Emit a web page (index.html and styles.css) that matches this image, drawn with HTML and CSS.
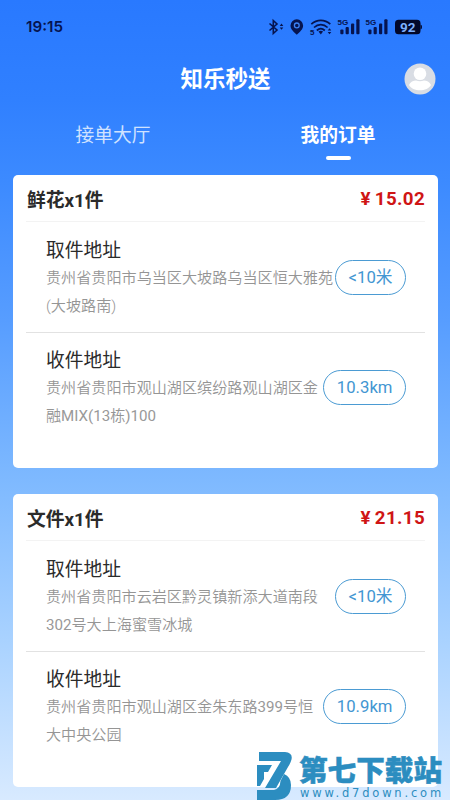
FILE: index.html
```html
<!DOCTYPE html>
<html lang="zh-CN">
<head>
<meta charset="utf-8">
<meta name="viewport" content="width=device-width, initial-scale=1">
<title>知乐秒送</title>
<link rel="stylesheet" href="styles.css">
</head>
<body>
<div class="app">
  <div class="status">
    <span class="time">19:15</span>
    <svg class="status-icons" width="154" height="20" viewBox="268 17 154 20" fill="none" stroke="#06144f">
      <path d="M269.500 23.500l7.500 6.500-3.700 3.500V20.500l3.700 3.500-7.500 6.500" stroke-width="1.600"/>
      <path d="M281.500 23.600l1.800 2.400h-3.600zM281.500 29.800l1.800-2.400h-3.600z" fill="#06144f" stroke="none"/>
      <path d="M296.800 19.300a6.300 6.300 0 0 1 6.300 6.300c0 3.800-3.500 6.700-6.300 9.200-2.800-2.500-6.300-5.400-6.300-9.200a6.300 6.300 0 0 1 6.300-6.300z" fill="#06144f" stroke="none"/>
      <circle cx="296.800" cy="25.400" r="2.400" stroke="#3b82f5" stroke-width="1.300"/>
      <path d="M311.300 24.200c5.500-5.200 13.500-5.200 19 0M314 27.500c4-3.700 9.600-3.700 13.600 0M316.800 30.500c2.400-2.200 5.600-2.200 8 0" stroke-width="1.700"/>
      <path d="M318.500 31.600q2.300-1.600 4.600 0l-2.300 3z" fill="#06144f" stroke="none"/>
      <path d="M329.500 28.300l1.800 2.300h-3.600zM329.500 34.300l1.800-2.300h-3.600z" fill="#06144f" stroke="none"/>
      <g fill="#06144f" stroke="none" class="tiny">
        <text x="310" y="34.500">5</text>
        <text x="337.500" y="25">5G</text>
        <text x="365.500" y="25">5G</text>
        <rect x="340.300" y="29.500" width="3.200" height="4.800" rx="1"/>
        <rect x="345.600" y="27" width="3.200" height="7.300" rx="1"/>
        <rect x="351" y="23.500" width="3.200" height="10.800" rx="1"/>
        <rect x="356.300" y="19.200" width="3.200" height="15.100" rx="1"/>
        <rect x="368.300" y="29.500" width="3.200" height="4.800" rx="1"/>
        <rect x="373.600" y="27" width="3.200" height="7.300" rx="1"/>
        <rect x="379" y="23.500" width="3.200" height="10.800" rx="1"/>
        <rect x="384.300" y="19.200" width="3.200" height="15.100" rx="1"/>
        <rect x="395" y="19.800" width="25.500" height="14.500" rx="3.500" fill="#02082a"/>
        <path d="M420.500 24.500q1.500.3 1.500 2.500t-1.500 2.500z" fill="#02082a"/>
      </g>
      <text class="battery" x="407.800" y="31.600" text-anchor="middle" fill="#7db0ff" stroke="none">92</text>
    </svg>
  </div>

  <header class="titlebar">
    <h1>知乐秒送</h1>
    <svg class="avatar" width="32" height="32" viewBox="0 0 32 32">
      <circle cx="16" cy="16" r="15.500" fill="#d9dde4"/>
      <circle cx="16" cy="10.800" r="6.300" fill="#fff"/>
      <path d="M5 22c1.200-3.200 4.500-4.500 7-4.500q4 1.600 8 0c2.500 0 5.800 1.300 7 4.500-2 3.500-6.200 5.300-11 5.300S7 25.500 5 22z" fill="#fff"/>
    </svg>
  </header>

  <nav class="tabs">
    <div class="tab">接单大厅</div>
    <div class="tab active">我的订单</div>
  </nav>

  <main class="orders">
    <section class="card">
      <div class="card-head"><span>鲜花x1件</span><span class="price"><span class="yen">¥</span>15.02</span></div>
      <div class="stop">
        <div class="place"><h2>取件地址</h2><p>贵州省贵阳市乌当区大坡路乌当区恒大雅苑<br>(大坡路南)</p></div>
        <span class="distance">&lt;10米</span>
      </div>
      <div class="stop">
        <div class="place"><h2>收件地址</h2><p>贵州省贵阳市观山湖区缤纷路观山湖区金<br>融<span class="latin">MIX(13</span>栋<span class="latin">)100</span></p></div>
        <span class="distance">10.3km</span>
      </div>
    </section>
    <section class="card">
      <div class="card-head"><span>文件x1件</span><span class="price"><span class="yen">¥</span>21.15</span></div>
      <div class="stop">
        <div class="place"><h2>取件地址</h2><p>贵州省贵阳市云岩区黔灵镇新添大道南段<br><span class="latin">302</span>号大上海蜜雪冰城</p></div>
        <span class="distance">&lt;10米</span>
      </div>
      <div class="stop">
        <div class="place"><h2>收件地址</h2><p>贵州省贵阳市观山湖区金朱东路<span class="latin">399</span>号恒<br>大中央公园</p></div>
        <span class="distance">10.9km</span>
      </div>
    </section>
  </main>

  <div class="watermark">
    <svg width="36" height="48" viewBox="0 0 36 48" fill="#2c8dc0">
      <path d="M0 13H15L11 20H7V27L3 34H0z"/>
      <path d="M27 22Q34 25 34 33Q34 48 18 48H0V38H17Q23 37 23.500 29z"/>
      <path d="M2 0H28Q37 1 34 9Q33 12 31 15L19 36H8L24 9H2z"/>
    </svg>
    <div class="mark-text"><strong>第七下载站</strong><span>www.d7down.com</span></div>
  </div>
</div>
</body>
</html>
```
FILE: styles.css
```css
* { box-sizing: border-box; }
body { margin: 0; }
.app {
  position: relative;
  width: 450px;
  height: 800px;
  overflow: hidden;
  font-family: Roboto, "Noto Sans CJK SC", sans-serif;
  color: #2b2b2b;
  background: linear-gradient(180deg, #2979ff 0, #3080ff 100px, #3c8aff 180px, #579dff 320px, #7eb9ff 480px, #a9d2ff 640px, #d8eaff 800px);
}
.status {
  display: flex;
  justify-content: space-between;
  height: 54px;
  padding: 17px 28px 0 26px;
}
.time {
  font: 600 15.2px/20px Inter, sans-serif;
  color: #06144f;
}
.status-icons { display: block; }
.tiny { font: 700 8px "Liberation Sans", sans-serif; }
.battery { font: 700 13.5px Roboto, sans-serif; }
.titlebar {
  position: relative;
  display: flex;
  align-items: center;
  justify-content: center;
  height: 50px;
}
h1 {
  margin: 0;
  padding-left: 1px;
  font-size: 22.5px;
  line-height: 30px;
  font-weight: 700;
  color: #fff;
}
.avatar { position: absolute; right: 14px; top: 9px; }
.tabs { display: flex; height: 71px; }
.tab {
  position: relative;
  flex: 1;
  padding: 18px 0 0 1px;
  line-height: 28px;
  font-size: 18.75px;
  text-align: center;
  color: #d0e2ff;
}
.tab.active { color: #fff; font-weight: 700; }
.tab.active::after {
  content: "";
  position: absolute;
  left: 50%;
  top: 52px;
  width: 25px;
  height: 4px;
  margin-left: -12px;
  border-radius: 2px;
  background: #fff;
}
.orders { display: flex; flex-direction: column; gap: 26px; padding: 0 12px 0 13px; }
.card { height: 293px; padding: 0 13px; border-radius: 5px; background: #fff; }
.card-head {
  display: flex;
  align-items: center;
  justify-content: space-between;
  height: 47px;
  padding: 0 0 0 1px;
  border-bottom: 1px solid #f3f3f3;
  font-size: 18.75px;
  font-weight: 700;
}
.price { padding-top: 2px; color: #cf1515; letter-spacing: .35px; }
.yen { margin-right: 4px; }
.stop {
  display: flex;
  align-items: center;
  justify-content: space-between;
  height: 110px;
  padding: 1px 19px 0 20px;
}
.stop + .stop { border-top: 1px solid #e2e2e2; padding-top: 0; }
.place { flex: none; white-space: nowrap; }
h2 { margin: 1px 0 -1px; font-size: 18.75px; line-height: 28px; font-weight: 400; }
p { margin: 0; font-size: 15.12px; line-height: 28px; color: #959595; font-weight: 350; }
.latin { font-weight: 400; color: #999; }
.distance {
  flex: none;
  height: 35px;
  padding: 0 12.5px;
  border: 1px solid #4b9bd3;
  border-radius: 18px;
  line-height: 33px;
  font-size: 16.7px;
  color: #4296d2;
}
.watermark {
  position: absolute;
  left: 257px;
  top: 752px;
  display: flex;
  color: #2c8dc0;
}
.mark-text { display: flex; flex-direction: column; margin-left: 6px; }
.mark-text strong {
  font: 900 28.6px/34px "Noto Sans CJK SC", sans-serif;
  white-space: nowrap;
  -webkit-text-stroke: .5px #2c8dc0;
}
.mark-text span { margin-left: 1px; font: 400 11.5px/14px "DejaVu Sans", sans-serif; letter-spacing: 2.8px; white-space: nowrap; }
```
